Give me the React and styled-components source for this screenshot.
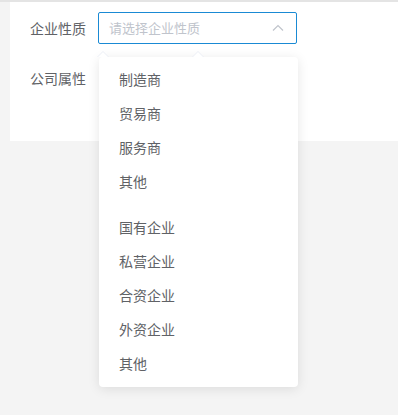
import React from "react";
import styled, { createGlobalStyle } from "styled-components";

const Global = createGlobalStyle`
  html, body { margin: 0; padding: 0; }
  body { font-family: "Noto Sans CJK SC", "Noto Sans", sans-serif; background: #f4f4f4; }
`;

const Page = styled.div`
  position: relative;
  width: 398px;
  height: 415px;
  background: #f4f4f4;
  border-top: 2px solid #e4e4e4;
  box-sizing: border-box;
  overflow: hidden;
`;

const Panel = styled.div`
  margin-left: 10px;
  height: 139px;
  background: #fff;
  padding: 10px 0 0 20px;
  box-sizing: border-box;
  display: flex;
  flex-direction: column;
  gap: 18px;
`;

const Row = styled.div`
  display: flex;
  align-items: center;
  height: 32px;
`;

const Label = styled.div`
  width: 68px;
  font-size: 14px;
  color: #606266;
  line-height: 31px;
`;

const Select = styled.div`
  position: relative;
  width: 199px;
  height: 32px;
  box-sizing: border-box;
  border: 1px solid #1a8ad4;
  border-radius: 2px;
  display: flex;
  align-items: center;
  justify-content: space-between;
  padding: 0 12px 0 10px;
`;

const Placeholder = styled.span`
  font-size: 13px;
  color: #c0c4cc;
  line-height: 28px;
`;

const Menu = styled.div`
  position: absolute;
  top: 55px;
  left: 99px;
  width: 199px;
  height: 330px;
  background: #fff;
  border-radius: 4px;
  box-shadow: 0 2px 12px 0 rgba(0, 0, 0, 0.1);
  padding: 5px 0 7px;
  box-sizing: border-box;
`;

const Arrow = styled.div`
  position: absolute;
  top: -6px;
  left: ${(p) => p.$left}px;
  width: 0;
  height: 0;
  border-left: 6px solid transparent;
  border-right: 6px solid transparent;
  border-bottom: 6px solid #ebeef5;
  &::after {
    content: "";
    position: absolute;
    left: -5px;
    top: 1px;
    border-left: 5px solid transparent;
    border-right: 5px solid transparent;
    border-bottom: 5px solid #fff;
  }
`;

const Group = styled.div`
  & + & { margin-top: 12px; }
`;

const Item = styled.div`
  height: 34px;
  line-height: 34px;
  padding-left: 20px;
  font-size: 14px;
  color: #606266;
`;

const groups = [
  ["制造商", "贸易商", "服务商", "其他"],
  ["国有企业", "私营企业", "合资企业", "外资企业", "其他"],
];

export default function App() {
  return (
    <>
      <Global />
      <Page>
        <Panel>
          <Row>
            <Label>企业性质</Label>
            <Select>
              <Placeholder>请选择企业性质</Placeholder>
              <svg width="12" height="8" viewBox="0 0 12 8">
                <path d="M1 6.5 L6 1.5 L11 6.5" fill="none" stroke="#c0c4cc" strokeWidth="1.2" />
              </svg>
            </Select>
          </Row>
          <Row>
            <Label>公司属性</Label>
          </Row>
        </Panel>
        <Menu>
          <Arrow $left={-2} />
          <Arrow $left={93} />
          {groups.map((g, i) => (
            <Group key={i}>
              {g.map((t, j) => (
                <Item key={j}>{t}</Item>
              ))}
            </Group>
          ))}
        </Menu>
      </Page>
    </>
  );
}
